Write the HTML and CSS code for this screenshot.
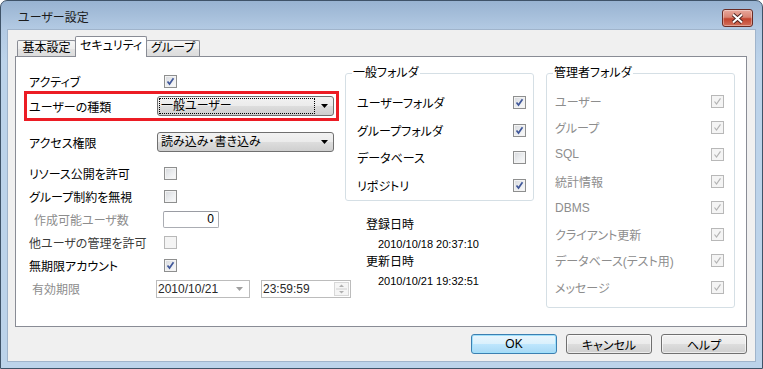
FILE: index.html
```html
<!DOCTYPE html>
<html lang="ja">
<head>
  <meta charset="UTF-8">
  <title>ユーザー設定</title>
  <link rel="stylesheet" href="styles.css">
</head>
<body>

  <div class="window">
    <div class="titlebar">
      <span class="title">ユーザー設定</span>
      <span class="close-btn">
        <svg width="13" height="11" viewBox="0 0 13 11">
          <path d="M2 1.5 L11 9.5 M11 1.5 L2 9.5" stroke="#4e2420" stroke-width="3.8" fill="none"/>
          <path d="M2 1.5 L11 9.5 M11 1.5 L2 9.5" stroke="#ffffff" stroke-width="2" fill="none"/>
        </svg>
      </span>
    </div>

    <div class="client">
      <div class="tabs">
        <div class="tab tab-basic">基本設定</div>
        <div class="tab tab-security active">セキュリティ</div>
        <div class="tab tab-group">グループ</div>
      </div>

      <div class="panel">
        <!-- left column -->
        <div class="col-left">
          <div class="row row-first">
            <span class="label">アクティブ</span>
            <span class="cb checked"><svg viewBox="0 0 11 11"><path d="M2.5 5.5 L4.5 8 L8.5 2.3"/></svg></span>
          </div>
          <div class="row highlight">
            <span class="label">ユーザーの種類</span>
            <div class="combo">
              <span class="combo-text focus">一般ユーザー</span>
              <svg class="arrow" width="7" height="4" viewBox="0 0 7 4"><polygon points="0,0 7,0 3.5,4"/></svg>
            </div>
          </div>
          <div class="row row-combo">
            <span class="label">アクセス権限</span>
            <div class="combo">
              <span class="combo-text">読み込み・書き込み</span>
              <svg class="arrow" width="7" height="4" viewBox="0 0 7 4"><polygon points="0,0 7,0 3.5,4"/></svg>
            </div>
          </div>

          <div class="rows">
            <div class="row">
              <span class="label">リソース公開を許可</span>
              <span class="cb"></span>
            </div>
            <div class="row">
              <span class="label">グループ制約を無視</span>
              <span class="cb"></span>
            </div>
            <div class="row">
              <span class="label indent disabled">作成可能ユーザ数</span>
              <span class="textbox">0</span>
            </div>
            <div class="row">
              <span class="label dim">他ユーザの管理を許可</span>
              <span class="cb off"></span>
            </div>
            <div class="row">
              <span class="label">無期限アカウント</span>
              <span class="cb checked"><svg viewBox="0 0 11 11"><path d="M2.5 5.5 L4.5 8 L8.5 2.3"/></svg></span>
            </div>
            <div class="row">
              <span class="label indent-s disabled">有効期限</span>
              <span class="picker date">
                <span class="num">2010/10/21</span>
                <svg width="7" height="4" viewBox="0 0 7 4"><polygon points="0,0 7,0 3.5,4" fill="#a0a0a0"/></svg>
              </span>
              <span class="picker time">
                <span class="num">23:59:59</span>
                <span class="spin">
                  <svg width="13" height="14" viewBox="0 0 13 14">
                    <polygon points="4,5 9,5 6.5,2.5" fill="#b0b0b0"/>
                    <line x1="1" y1="7" x2="12" y2="7" stroke="#d0d0d0"/>
                    <polygon points="4,9 9,9 6.5,11.5" fill="#b0b0b0"/>
                  </svg>
                </span>
              </span>
            </div>
          </div>
        </div>

        <!-- middle column -->
        <div class="col-mid">
          <fieldset class="group group-general">
            <legend>一般フォルダ</legend>
            <div class="grow">
              <span>ユーザーフォルダ</span>
              <span class="cb checked"><svg viewBox="0 0 11 11"><path d="M2.5 5.5 L4.5 8 L8.5 2.3"/></svg></span>
            </div>
            <div class="grow">
              <span>グループフォルダ</span>
              <span class="cb checked"><svg viewBox="0 0 11 11"><path d="M2.5 5.5 L4.5 8 L8.5 2.3"/></svg></span>
            </div>
            <div class="grow">
              <span>データベース</span>
              <span class="cb"></span>
            </div>
            <div class="grow">
              <span>リポジトリ</span>
              <span class="cb checked"><svg viewBox="0 0 11 11"><path d="M2.5 5.5 L4.5 8 L8.5 2.3"/></svg></span>
            </div>
          </fieldset>

          <div class="info">
            <div>登録日時</div>
            <div class="info-date">2010/10/18 20:37:10</div>
            <div>更新日時</div>
            <div class="info-date">2010/10/21 19:32:51</div>
          </div>
        </div>

        <!-- right column -->
        <div class="col-right">
          <fieldset class="group group-admin">
            <legend>管理者フォルダ</legend>
            <div class="grow"><span>ユーザー</span><span class="cb off checked"><svg viewBox="0 0 11 11"><path d="M2.5 5.5 L4.5 8 L8.5 2.3"/></svg></span></div>
            <div class="grow"><span>グループ</span><span class="cb off checked"><svg viewBox="0 0 11 11"><path d="M2.5 5.5 L4.5 8 L8.5 2.3"/></svg></span></div>
            <div class="grow"><span>SQL</span><span class="cb off checked"><svg viewBox="0 0 11 11"><path d="M2.5 5.5 L4.5 8 L8.5 2.3"/></svg></span></div>
            <div class="grow"><span>統計情報</span><span class="cb off checked"><svg viewBox="0 0 11 11"><path d="M2.5 5.5 L4.5 8 L8.5 2.3"/></svg></span></div>
            <div class="grow"><span>DBMS</span><span class="cb off checked"><svg viewBox="0 0 11 11"><path d="M2.5 5.5 L4.5 8 L8.5 2.3"/></svg></span></div>
            <div class="grow"><span>クライアント更新</span><span class="cb off checked"><svg viewBox="0 0 11 11"><path d="M2.5 5.5 L4.5 8 L8.5 2.3"/></svg></span></div>
            <div class="grow"><span>データベース(テスト用)</span><span class="cb off checked"><svg viewBox="0 0 11 11"><path d="M2.5 5.5 L4.5 8 L8.5 2.3"/></svg></span></div>
            <div class="grow"><span>メッセージ</span><span class="cb off checked"><svg viewBox="0 0 11 11"><path d="M2.5 5.5 L4.5 8 L8.5 2.3"/></svg></span></div>
          </fieldset>
        </div>
      </div>

      <div class="buttons">
        <button class="btn default">OK</button>
        <button class="btn">キャンセル</button>
        <button class="btn">ヘルプ</button>
      </div>
    </div>
  </div>

</body>
</html>
```

FILE: styles.css
```css
* {
  box-sizing: border-box;
}

body {
  margin: 0;
  padding: 0;
  font-family: "Liberation Sans", "Noto Sans CJK JP", sans-serif;
  font-size: 12px;
  font-feature-settings: "palt" 1;
  color: #000000;
  background-color: #ffffff;
}

.window {
  width: 763px;
  height: 369px;
  border: 1px solid #3f5368;
  border-radius: 7px 7px 0 0;
  background: linear-gradient(to bottom, #98b3d1 0, #b3cae3 28px, #bcd3ea 60px, #bcd3ea 100%);
  padding: 0 6px 6px;
  display: flex;
  flex-direction: column;
  overflow: hidden;
}

/* title bar */
.titlebar {
  height: 28px;
  display: flex;
  align-items: flex-start;
  padding-left: 11px;
}

.title {
  margin-top: 9px;
  line-height: 16px;
  color: #1b1b1b;
}

.close-btn {
  margin-left: auto;
  margin-top: 8px;
  margin-right: 3px;
  width: 31px;
  height: 18px;
  border: 1px solid #6a2c25;
  border-radius: 3px;
  background: linear-gradient(to bottom, #e9a89c 0, #d98473 45%, #c3442e 55%, #d2705b 100%);
  box-shadow: inset 0 0 0 1px rgba(255, 255, 255, 0.35);
  display: flex;
  align-items: center;
  justify-content: center;
}

/* client area */
.client {
  flex: 1;
  background-color: #f0f0f0;
  border: 1px solid #a0b4cb;
  padding: 6px 0 0 7px;
  display: flex;
  flex-direction: column;
}

.tabs {
  display: flex;
  align-items: flex-end;
  height: 21px;
  margin-bottom: -1px;
  padding-left: 2px;
}

.tab {
  height: 16px;
  margin-bottom: 1px;
  border: 1px solid #898c95;
  border-bottom: none;
  border-radius: 2px 2px 0 0;
  background: linear-gradient(to bottom, #f6f6f6 0, #ededed 50%, #e3e3e3 51%, #dcdcdc 100%);
  text-align: center;
  line-height: 14px;
  white-space: nowrap;
  padding: 0 4px;
}

.tab-basic {
  min-width: 59px;
}

.tab-security {
  min-width: 68px;
  margin-left: -1px;
}

.tab-group {
  min-width: 46px;
  margin-left: -1px;
}

.tab.active {
  height: 21px;
  margin-bottom: 0;
  background: #ffffff;
  line-height: 18px;
  position: relative;
  z-index: 1;
}

.panel {
  width: 732px;
  height: 271px;
  border: 1px solid #898c95;
  background-color: #ffffff;
  display: flex;
  align-items: flex-start;
}

/* left column */
.col-left {
  width: 315px;
  flex-shrink: 0;
  margin-left: 8px;
  margin-top: 15px;
}

.row {
  display: flex;
  align-items: center;
  height: 23px;
  padding-left: 5px;
  white-space: nowrap;
}

.row .label {
  width: 127px;
  flex-shrink: 0;
}

.label.indent {
  padding-left: 5px;
}

.label.indent-s {
  padding-left: 3px;
}

.disabled {
  color: #8d8d8d;
}

.dim {
  color: #3c3c3c;
}

.row-first {
  height: 19px;
}

.highlight {
  height: 30px;
  border: 3px solid #ec1c24;
  padding-left: 2px;
  padding-right: 2px;
}

.row-combo {
  height: 22px;
  margin-top: 10px;
}

.rows {
  margin-top: 9px;
}

.rows .row {
  height: 23px;
}

/* checkbox */
.cb {
  display: inline-block;
  width: 13px;
  height: 13px;
  flex-shrink: 0;
  border: 1px solid #8e8f8f;
  background: linear-gradient(135deg, #d6d8dc 0, #eceef0 55%, #fbfbfb 100%);
  box-shadow: inset 0 0 0 1px #f3f3f3;
}

.row .cb {
  margin-left: 8px;
}

.cb svg {
  display: block;
  width: 11px;
  height: 11px;
}

.cb svg path {
  fill: none;
  stroke: #41589a;
  stroke-width: 1.7;
}

.cb.off {
  border-color: #b8b8b8;
  background: #f4f4f4;
  box-shadow: none;
}

.cb.off svg path {
  stroke: #b3b3b3;
  stroke-width: 1.2;
}

/* combobox */
.combo {
  width: 177px;
  height: 20px;
  flex-shrink: 0;
  margin-left: 1px;
  border: 1px solid #707070;
  border-radius: 3px;
  background: linear-gradient(to bottom, #f2f2f2 0, #ebebeb 50%, #dddddd 50%, #cfcfcf 100%);
  display: flex;
  align-items: center;
  padding: 0 5px 0 1px;
}

.combo-text {
  flex: 1;
  height: 16px;
  line-height: 14px;
  padding-left: 1px;
  border: 1px solid transparent;
  margin-right: 6px;
}

.combo-text.focus {
  border: 1px dotted #000000;
}

.arrow {
  flex-shrink: 0;
}

/* text box and pickers */
.textbox {
  width: 56px;
  height: 17px;
  flex-shrink: 0;
  margin-left: 7px;
  border: 1px solid #abadb3;
  border-top-color: #9a9ca3;
  border-radius: 2px;
  background-color: #ffffff;
  text-align: right;
  padding-right: 4px;
  line-height: 15px;
}

.picker {
  height: 18px;
  flex-shrink: 0;
  border: 1px solid #bcbcbc;
  background-color: #ffffff;
  display: flex;
  align-items: center;
  padding-left: 1px;
  color: #2a2a2a;
}

.num {
  flex: 1;
  line-height: 16px;
}

.date {
  width: 94px;
  padding-right: 6px;
}

.time {
  width: 90px;
  margin-left: 11px;
  padding-right: 1px;
}

.spin {
  width: 15px;
  height: 14px;
  border: 1px solid #d8d8d8;
  background: #f5f5f5;
  display: flex;
  align-items: center;
  justify-content: center;
}

/* group boxes */
.col-mid {
  width: 189px;
  flex-shrink: 0;
  margin-left: 6px;
  margin-top: 9px;
}

.col-right {
  width: 189px;
  flex-shrink: 0;
  margin-left: 12px;
  margin-top: 9px;
}

.group {
  margin: 0;
  min-width: 0;
  border: 1px solid #d5dfe5;
  border-radius: 3px;
}

.group legend {
  line-height: 14px;
  padding: 0 1px;
}

.grow {
  display: flex;
  justify-content: space-between;
  align-items: center;
  white-space: nowrap;
}

.group-general {
  padding: 9px 7px 1px 11px;
}

.group-general legend {
  margin-left: -5px;
}

.group-general .grow {
  height: 27.5px;
}

.group-admin {
  padding: 8px 10px 6px 8px;
  color: #8d8d8d;
}

.group-admin legend {
  margin-left: -2px;
  color: #000000;
}

.group-admin .grow {
  height: 26.6px;
}

.info {
  margin-top: 15px;
  padding-left: 21px;
  line-height: 18.5px;
}

.info-date {
  padding-left: 12px;
  font-size: 11px;
}

/* dialog buttons */
.buttons {
  display: flex;
  justify-content: flex-end;
  gap: 9px;
  margin-top: 7px;
  padding-right: 8px;
}

.btn {
  width: 86px;
  height: 20px;
  padding: 0;
  font-family: "Liberation Sans", "Noto Sans CJK JP", sans-serif;
  font-size: 12px;
  font-feature-settings: "palt" 1;
  color: #000000;
  border: 1px solid #707070;
  border-radius: 3px;
  background: linear-gradient(to bottom, #f2f2f2 0, #ebebeb 50%, #dddddd 50%, #cfcfcf 100%);
  box-shadow: inset 0 0 0 1px rgba(255, 255, 255, 0.6);
}

.btn.default {
  border-color: #3c7fb1;
  background: linear-gradient(to bottom, #eaf6fd 0, #d9f0fc 50%, #bee6fd 50%, #a7d9f5 100%);
  box-shadow: inset 0 0 0 1px #9fe0fb;
}
```
